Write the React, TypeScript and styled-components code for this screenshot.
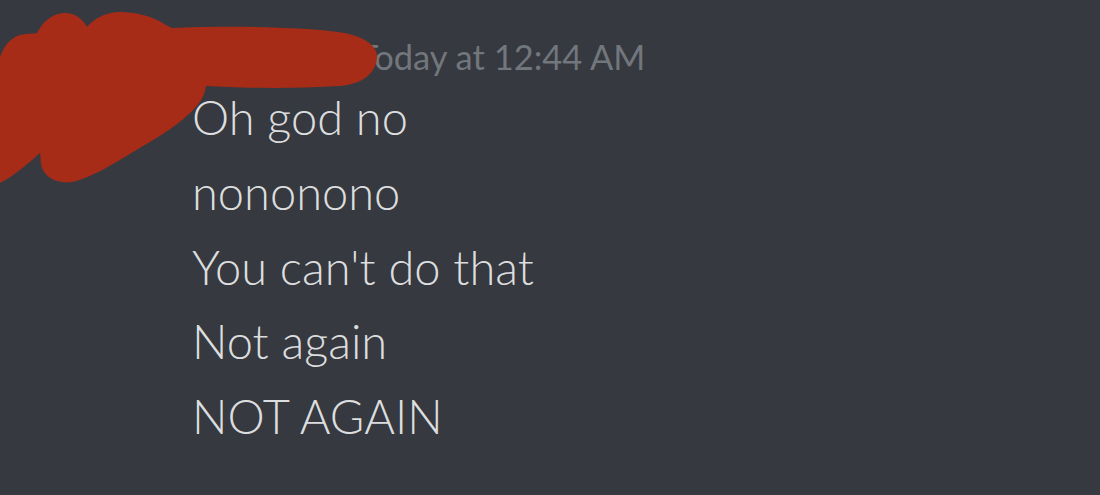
import styled, { createGlobalStyle } from "styled-components";

const GlobalStyle = createGlobalStyle`
  html, body {
    margin: 0;
    padding: 0;
    background: #36393f;
  }
  body {
    width: 1100px;
    height: 495px;
    overflow: hidden;
  }
`;

const Chat = styled.div`
  position: relative;
  width: 1100px;
  height: 495px;
  background: #36393f;
  font-family: Lato, "Open Sans", sans-serif;
  overflow: hidden;
`;

const Message = styled.div`
  display: flex;
  padding: 30px 0 0 45px;
  gap: 47px;
`;

const Avatar = styled.div`
  flex: none;
  width: 100px;
  height: 100px;
  border-radius: 50%;
  margin-top: 4px;
  background: #c9a46a;
`;

const Content = styled.div`
  display: flex;
  flex-direction: column;
`;

const Header = styled.div`
  display: flex;
  align-items: baseline;
  height: 50px;
  line-height: 46px;
`;

const Username = styled.span`
  flex: none;
  width: 166px;
  font-size: 44px;
  font-weight: 700;
  color: #ffffff;
  white-space: nowrap;
`;

const Timestamp = styled.span`
  font-size: 34.5px;
  font-weight: 400;
  color: #72767d;
  white-space: nowrap;
`;

const Line = styled.div`
  font-size: 47px;
  font-weight: 300;
  line-height: 74.75px;
  color: #dcddde;
  white-space: nowrap;
`;

const Scribble = styled.svg`
  position: absolute;
  left: 0;
  top: 0;
  pointer-events: none;
`;

const lines = ["Oh god no", "nononono", "You can't do that", "Not again", "NOT AGAIN"];

export default function App() {
  return (
    <Chat>
      <GlobalStyle />
      <Message>
        <Avatar />
        <Content>
          <Header>
            <Username>user</Username>
            <Timestamp>Today at 12:44 AM</Timestamp>
          </Header>
          {lines.map((text) => (
            <Line key={text}>{text}</Line>
          ))}
        </Content>
      </Message>
      <Scribble width="400" height="200" viewBox="0 0 400 200">
        <path
          fill="#a72c18"
          d="M0 57 C4 46 10 38 20 35 C28 33 33 34 37 33 C42 24 48 17 58 14 C68 11 80 14 87 27
             C94 18 108 11 123 12 C138 13 148 16 155 19 C162 22 167 26 172 28
             C220 26 300 26 345 33 C368 38 378 48 377 58 C376 72 364 84 340 86
             C290 89 240 88 206 86 C205 95 200 104 190 113 C175 128 150 142 128 155
             C110 166 90 178 72 182 C58 184 46 178 42 168 C40 162 41 157 40 153
             C30 162 14 176 0 183 Z"
        />
      </Scribble>
    </Chat>
  );
}
